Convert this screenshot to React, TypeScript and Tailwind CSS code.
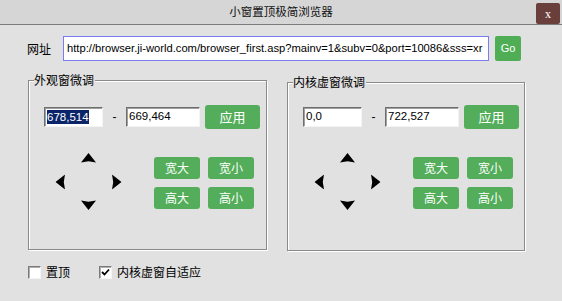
import React from 'react';

const cn = '"Noto Sans CJK SC", sans-serif';
const latin = '"Liberation Sans", "Noto Sans CJK SC", sans-serif';

const Arrow: React.FC<{ dir: 'up' | 'down' | 'left' | 'right' }> = ({ dir }) => {
  const rot = { up: 0, right: 90, down: 180, left: 270 }[dir];
  return (
    <svg width="15" height="10" viewBox="0 0 15 10" style={{ transform: `rotate(${rot}deg)` }}>
      <path d="M7.5 0 L15 9.5 L7.5 8.3 L0 9.5 Z" fill="#000" />
    </svg>
  );
};

const Field: React.FC<{ value: string; width: string; selected?: boolean }> = ({ value, width, selected }) => (
  <div
    className={`${width} h-[20px] bg-white border border-t-[#6e6e6e] border-l-[#6e6e6e] border-b-[#f4f4f4] border-r-[#f4f4f4] shadow-[inset_1px_1px_0_#a0a0a0] flex items-center pl-[2px] text-[11.5px] text-black`}
    style={{ fontFamily: latin }}
  >
    {selected ? <span className="bg-[#0a246a] text-white leading-[14px]">{value}</span> : <span>{value}</span>}
  </div>
);

const GreenBtn: React.FC<{ label: string; className?: string }> = ({ label, className }) => (
  <button className={`bg-[#53ad5a] text-white rounded-[3px] flex items-center justify-center text-[12px] ${className ?? ''}`}>
    {label}
  </button>
);

const Group: React.FC<{
  title: string;
  from: string;
  to: string;
  width: string;
  top: string;
  height: string;
  selected?: boolean;
}> = ({ title, from, to, width, top, height, selected }) => (
  <div className={`relative ${width} ${height} border border-[#8a8a8a] shadow-[1px_1px_0_#fff,inset_1px_1px_0_#fff]`}>
    <span className="absolute -top-[9px] left-[5px] bg-[#e1e1e1] pr-[1px] text-[12px] leading-[16px] text-black">
      {title}
    </span>
    <div className={`flex items-center ${top} pl-[15px]`}>
      <Field value={from} width="w-[59px]" selected={selected} />
      <span className="w-[23px] text-center text-[12px]" style={{ fontFamily: latin }}>
        -
      </span>
      <Field value={to} width="w-[74px]" />
      <GreenBtn label="应用" className="ml-[5px] w-[55px] h-[24px] text-[13px]" />
    </div>
    <div className="flex items-start pl-[26px] mt-[24px]">
      <div className="grid grid-cols-[11px_45px_11px] grid-rows-[10px_37px_10px] place-items-center">
        <span />
        <Arrow dir="up" />
        <span />
        <Arrow dir="left" />
        <span />
        <Arrow dir="right" />
        <span />
        <Arrow dir="down" />
        <span />
      </div>
      <div className="grid grid-cols-[46px_46px] gap-x-[8px] gap-y-[8px] ml-[32px] mt-[4px]">
        <GreenBtn label="宽大" className="h-[22px]" />
        <GreenBtn label="宽小" className="h-[22px]" />
        <GreenBtn label="高大" className="h-[22px]" />
        <GreenBtn label="高小" className="h-[22px]" />
      </div>
    </div>
  </div>
);

const CheckBox: React.FC<{ checked?: boolean }> = ({ checked }) => (
  <div className="w-[13px] h-[13px] bg-white border border-t-[#7a7a7a] border-l-[#7a7a7a] border-b-[#f4f4f4] border-r-[#f4f4f4] shadow-[inset_1px_1px_0_#b0b0b0] flex items-center justify-center">
    {checked && (
      <svg width="9" height="9" viewBox="0 0 9 9">
        <path d="M1 4 L3.5 6.5 L8 1.5" stroke="#000" strokeWidth="1.8" fill="none" />
      </svg>
    )}
  </div>
);

const App: React.FC = () => {
  return (
    <div className="w-[562px] h-[301px] bg-[#e1e1e1] flex flex-col text-black" style={{ fontFamily: cn }}>
      <div className="relative h-[25px] bg-[#d6d6d6] border-b border-[#7c7c7c] flex items-center justify-center">
        <span className="text-[11.5px] text-[#111]">小窗置顶极简浏览器</span>
        <div
          className="absolute right-[2px] top-[3px] w-[24px] h-[21px] bg-[#6a3f3b] rounded-[2px] flex items-center justify-center text-white text-[12px]"
          style={{ fontFamily: '"Liberation Serif", serif' }}
        >
          x
        </div>
      </div>

      <div className="flex items-center mt-[11px] pl-[27px]">
        <span className="w-[36px] text-[12px]">网址</span>
        <div
          className="w-[426px] h-[25px] bg-white border border-[#7b7bf5] flex items-center pl-[3px] text-[11.2px] overflow-hidden whitespace-nowrap"
          style={{ fontFamily: latin }}
        >
          http://browser.ji-world.com/browser_first.asp?mainv=1&amp;subv=0&amp;port=10086&amp;sss=xr
        </div>
        <button
          className="ml-[6px] w-[26px] h-[25px] bg-[#4fae55] text-white text-[11px] rounded-[2px]"
          style={{ fontFamily: latin }}
        >
          Go
        </button>
      </div>

      <div className="flex items-start mt-[19px] pl-[28px] gap-[20px]">
        <Group
          title="外观窗微调"
          from="678,514"
          to="669,464"
          width="w-[239px]"
          height="h-[170px]"
          top="pt-[24px]"
          selected
        />
        <div className="mt-[2px]">
          <Group title="内核虚窗微调" from="0,0" to="722,527" width="w-[238px]" height="h-[169px]" top="pt-[22px]" />
        </div>
      </div>

      <div className="flex items-center mt-[12px] pl-[28px] text-[12px]">
        <CheckBox />
        <span className="ml-[5px]">置顶</span>
        <div className="ml-[29px]">
          <CheckBox checked />
        </div>
        <span className="ml-[5px]">内核虚窗自适应</span>
      </div>
    </div>
  );
};

export default App;
